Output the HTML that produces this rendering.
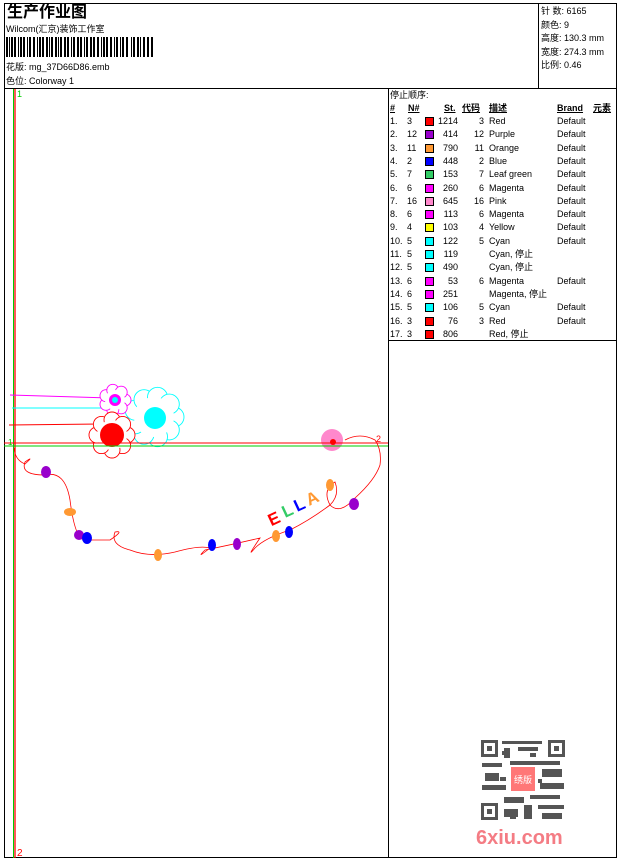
<!DOCTYPE html>
<html><head><meta charset="utf-8"><style>
body{margin:0;width:620px;height:860px;background:#fff;position:relative;font-family:"Liberation Sans","Noto Sans CJK SC",sans-serif;font-size:9px;line-height:11px;color:#000;overflow:hidden}
.a{position:absolute;white-space:nowrap;line-height:11px}
.sw{position:absolute;width:9px;height:9px;border:1px solid #000;box-sizing:border-box}
</style></head><body>
<div class="a" style="left:4px;top:3px;width:613px;height:855px;border:1px solid #000;box-sizing:border-box"></div>
<div class="a" style="left:4px;top:88px;width:613px;height:1px;background:#000"></div>
<div class="a" style="left:538px;top:3px;width:1px;height:86px;background:#000"></div>
<div class="a" style="left:388px;top:88px;width:1px;height:770px;background:#000"></div>
<div class="a" style="left:388px;top:340px;width:229px;height:1px;background:#000"></div>
<div class="a" style="left:7px;top:4px;font-size:16px;line-height:17px;font-weight:bold">生产作业图</div>
<div class="a" style="left:6px;top:24px">Wilcom(汇京)装饰工作室</div>
<svg class="a" style="left:6px;top:37px" width="148" height="20">
<g fill="#000">
<rect x="0" width="2" height="20"/><rect x="3" width="1" height="20"/><rect x="5" width="2" height="20"/><rect x="8" width="2" height="20"/><rect x="12" width="1" height="20"/><rect x="14" width="2" height="20"/><rect x="17" width="2" height="20"/><rect x="21" width="1" height="20"/><rect x="23" width="2" height="20"/><rect x="27" width="2" height="20"/><rect x="31" width="1" height="20"/><rect x="33" width="2" height="20"/><rect x="36" width="2" height="20"/><rect x="40" width="2" height="20"/><rect x="43" width="1" height="20"/><rect x="45" width="2" height="20"/><rect x="49" width="2" height="20"/><rect x="52" width="1" height="20"/><rect x="54" width="2" height="20"/><rect x="58" width="2" height="20"/><rect x="61" width="2" height="20"/><rect x="65" width="1" height="20"/><rect x="67" width="2" height="20"/><rect x="71" width="2" height="20"/><rect x="74" width="2" height="20"/><rect x="78" width="1" height="20"/><rect x="80" width="2" height="20"/><rect x="84" width="2" height="20"/><rect x="87" width="2" height="20"/><rect x="91" width="2" height="20"/><rect x="95" width="1" height="20"/><rect x="97" width="2" height="20"/><rect x="100" width="2" height="20"/><rect x="104" width="2" height="20"/><rect x="108" width="1" height="20"/><rect x="110" width="2" height="20"/><rect x="114" width="1" height="20"/><rect x="116" width="2" height="20"/><rect x="120" width="2" height="20"/><rect x="125" width="1" height="20"/><rect x="127" width="2" height="20"/><rect x="131" width="2" height="20"/><rect x="134" width="1" height="20"/><rect x="137" width="2" height="20"/><rect x="141" width="2" height="20"/><rect x="145" width="2" height="20"/>
</g></svg>
<div class="a" style="left:6px;top:62px">花版: mg_37D66D86.emb</div>
<div class="a" style="left:6px;top:76px">色位: Colorway 1</div>
<div class="a" style="left:541px;top:5px;line-height:13.5px">针 数: 6165<br>颜色: 9<br>高度: 130.3 mm<br>宽度: 274.3 mm<br>比例: 0.46</div>
<div class="a" style="left:390px;top:90px">停止顺序:</div>
<div class="a" style="left:390px;top:103px;font-weight:bold;text-decoration:underline">#</div>
<div class="a" style="left:408px;top:103px;font-weight:bold;text-decoration:underline">N#</div>
<div class="a" style="left:444px;top:103px;font-weight:bold;text-decoration:underline">St.</div>
<div class="a" style="left:462px;top:103px;font-weight:bold;text-decoration:underline">代码</div>
<div class="a" style="left:489px;top:103px;font-weight:bold;text-decoration:underline">描述</div>
<div class="a" style="left:557px;top:103px;font-weight:bold;text-decoration:underline">Brand</div>
<div class="a" style="left:593px;top:103px;font-weight:bold;text-decoration:underline">元素</div>
<div id="t"></div>
<script>
var rows=[["1.","3","#f00","1214","3","Red",1],["2.","12","#90c","414","12","Purple",1],["3.","11","#f93","790","11","Orange",1],["4.","2","#00f","448","2","Blue",1],["5.","7","#3c6","153","7","Leaf green",1],["6.","6","#f0f","260","6","Magenta",1],["7.","16","#f8c","645","16","Pink",1],["8.","6","#f0f","113","6","Magenta",1],["9.","4","#ff0","103","4","Yellow",1],["10.","5","#0ff","122","5","Cyan",1],["11.","5","#0ff","119","","Cyan, 停止",0],["12.","5","#0ff","490","","Cyan, 停止",0],["13.","6","#f0f","53","6","Magenta",1],["14.","6","#f0f","251","","Magenta, 停止",0],["15.","5","#0ff","106","5","Cyan",1],["16.","3","#f00","76","3","Red",1],["17.","3","#f00","806","","Red, 停止",0]];
var h="";rows.forEach(function(r,i){var y=116+i*13.3;
h+='<div class="a" style="left:390px;top:'+y+'px">'+r[0]+'</div><div class="a" style="left:407px;top:'+y+'px">'+r[1]+'</div><div class="sw" style="left:425px;top:'+(y+1)+'px;background:'+r[2]+'"></div><div class="a" style="left:436px;top:'+y+'px;width:22px;text-align:right">'+r[3]+'</div><div class="a" style="left:468px;top:'+y+'px;width:16px;text-align:right">'+r[4]+'</div><div class="a" style="left:489px;top:'+y+'px">'+r[5]+'</div>'+(r[6]?'<div class="a" style="left:557px;top:'+y+'px">Default</div>':'');});
document.getElementById("t").innerHTML=h;
function flower(cx,cy,r,n,pr,col){var s="";for(var k=0;k<n;k++){var a=k/n*2*Math.PI;s+='<circle cx="'+(cx+r*Math.cos(a)).toFixed(1)+'" cy="'+(cy+r*Math.sin(a)).toFixed(1)+'" r="'+pr+'" fill="#fff" stroke="'+col+'" stroke-width="0.9"/>';}return s;}
window.onload=function(){};
</script>
<svg class="a" style="left:0;top:0" width="388" height="858" id="d">
<line x1="13.5" y1="89" x2="13.5" y2="858" stroke="#0c0" stroke-width="1"/>
<line x1="15" y1="89" x2="15" y2="858" stroke="#f00" stroke-width="1.3"/>
<line x1="10" y1="395" x2="110" y2="398" stroke="#f0f"/>
<line x1="12" y1="408" x2="140" y2="408" stroke="#0ff"/>
<line x1="9" y1="425" x2="100" y2="424" stroke="#f00"/>
<g id="fl"></g>
<circle cx="155" cy="418" r="11" fill="#0ff"/>
<circle cx="115" cy="400" r="6" fill="#f0f"/><circle cx="115" cy="400" r="3" fill="#0ff"/>
<circle cx="112" cy="435" r="12" fill="#f00"/>
<circle cx="332" cy="440" r="11" fill="#f8c"/><circle cx="333" cy="442" r="3" fill="#f00"/>
<line x1="4" y1="443" x2="388" y2="443" stroke="#f00"/>
<line x1="4" y1="446" x2="388" y2="446" stroke="#0c0"/>
<text x="17" y="97" fill="#0c0" font-size="9" font-family="Liberation Sans">1</text>
<text x="17" y="856" fill="#f00" font-size="10" font-family="Liberation Sans">2</text>
<text x="8" y="445" fill="#0c0" font-size="8" font-family="Liberation Sans">1</text>
<text x="376" y="442" fill="#f00" font-size="9" font-family="Liberation Sans">2</text>
<path d="M14 448 Q15 460 25 464 Q35 455 25 462 Q20 475 45 475 Q65 470 70 500 Q75 540 85 540 Q100 540 110 540 Q125 530 115 532 Q110 545 130 550 Q150 558 175 552 Q200 545 210 548 Q195 560 205 550 Q230 545 260 538 Q245 560 255 548 Q265 538 290 530 Q310 520 330 505 Q322 490 335 482 Q340 495 330 505 Q340 515 355 498 Q375 480 380 465 Q382 450 375 440 Q360 432 345 440" fill="none" stroke="#f00" stroke-width="0.8"/>
<g>
<ellipse cx="46" cy="472" rx="5" ry="6" fill="#90c"/><ellipse cx="70" cy="512" rx="6" ry="4" fill="#f93"/><ellipse cx="79" cy="535" rx="5" ry="5" fill="#90c"/><ellipse cx="87" cy="538" rx="5" ry="6" fill="#00f"/><ellipse cx="158" cy="555" rx="4" ry="6" fill="#f93"/><ellipse cx="212" cy="545" rx="4" ry="6" fill="#00f"/><ellipse cx="237" cy="544" rx="4" ry="6" fill="#90c"/><ellipse cx="276" cy="536" rx="4" ry="6" fill="#f93"/><ellipse cx="289" cy="532" rx="4" ry="6" fill="#00f"/><ellipse cx="330" cy="485" rx="4" ry="6" fill="#f93"/><ellipse cx="354" cy="504" rx="5" ry="6" fill="#90c"/>
</g>
<g font-family="Liberation Sans" font-weight="bold" font-size="17">
<text x="268" y="524" fill="#f00" transform="rotate(-25 275 518)">E</text>
<text x="282" y="516" fill="#3c6" transform="rotate(-25 288 510)">L</text>
<text x="294" y="510" fill="#00f" transform="rotate(-25 300 504)">L</text>
<text x="306" y="504" fill="#f93" transform="rotate(-25 312 498)">A</text>
</g>
</svg>
<script>
document.getElementById("fl").innerHTML=flower(154,417,20,9,10,"#0ff")+'<circle cx="154" cy="417" r="20" fill="#fff"/>'+flower(115,400,10,7,6,"#f0f")+'<circle cx="115" cy="400" r="10" fill="#fff"/>'+flower(112,435,15,8,8,"#f00")+'<circle cx="112" cy="435" r="15" fill="#fff"/>';
</script>
<svg class="a" style="left:480px;top:739px" width="86" height="82">
<rect width="86" height="82" fill="#fff"/>
<g fill="#555">
<rect x="1" y="1" width="17" height="17"/><rect x="68" y="1" width="17" height="17"/><rect x="1" y="64" width="17" height="17"/>
</g>
<g fill="#fff"><rect x="4" y="4" width="11" height="11"/><rect x="71" y="4" width="11" height="11"/><rect x="4" y="67" width="11" height="11"/></g>
<g fill="#555"><rect x="7" y="7" width="5" height="5"/><rect x="74" y="7" width="5" height="5"/><rect x="7" y="70" width="5" height="5"/>
<rect x="22" y="2" width="40" height="3"/><rect x="24" y="9" width="6" height="10"/><rect x="38" y="8" width="20" height="4"/><rect x="2" y="24" width="20" height="4"/><rect x="30" y="22" width="50" height="4"/><rect x="5" y="34" width="14" height="8"/><rect x="62" y="30" width="20" height="8"/><rect x="2" y="46" width="24" height="5"/><rect x="60" y="44" width="24" height="6"/><rect x="24" y="58" width="20" height="6"/><rect x="50" y="56" width="30" height="4"/><rect x="24" y="70" width="14" height="8"/><rect x="44" y="66" width="8" height="14"/><rect x="58" y="66" width="26" height="4"/><rect x="62" y="74" width="20" height="6"/>
<rect x="22" y="12" width="4" height="4"/><rect x="50" y="14" width="6" height="4"/><rect x="20" y="38" width="6" height="4"/><rect x="58" y="40" width="4" height="4"/><rect x="30" y="76" width="6" height="4"/></g>
<rect x="31" y="28" width="24" height="24" fill="#f77"/>
<text x="43" y="44" font-size="9" fill="#fff" text-anchor="middle" font-family="Noto Sans CJK SC">绣版</text>
</svg>
<div class="a" style="left:476px;top:826px;font-size:20px;line-height:24px;font-weight:bold;color:#f47c84">6xiu.com</div>
</body></html>
